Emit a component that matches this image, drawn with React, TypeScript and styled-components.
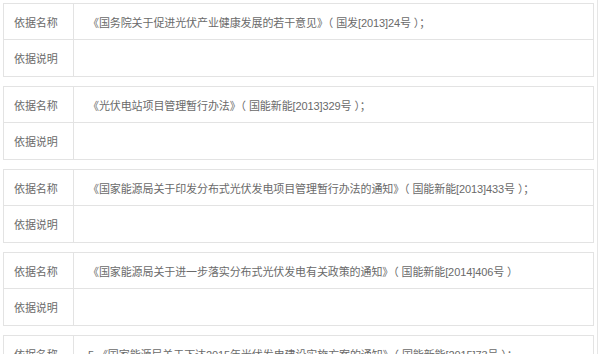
import React from "react";
import styled, { createGlobalStyle } from "styled-components";

const GlobalStyle = createGlobalStyle`
  html, body {
    margin: 0;
    padding: 0;
    background: #fff;
  }
  body {
    font-family: "Liberation Sans", "Noto Sans CJK SC", sans-serif;
  }
`;

export const Page = styled.div`
  width: 598px;
  height: 354px;
  overflow: hidden;
  border-right: 1px solid #e6e6e6;
  padding: 3px 0 0 3px;
  box-sizing: border-box;
`;

export const BasisTable = styled.div`
  width: 591px;
  border: 1px solid #e3e3e3;
  box-sizing: border-box;
  margin-bottom: 9px;
  display: grid;
  grid-template-columns: 70px 1fr;
`;

export const Cell = styled.div<{ $label?: boolean; $last?: boolean }>`
  height: 36px;
  box-sizing: border-box;
  display: flex;
  align-items: center;
  padding-left: ${(p) => (p.$label ? "10px" : "14px")};
  border-right: ${(p) => (p.$label ? "1px solid #e3e3e3" : "none")};
  border-bottom: ${(p) => (p.$last ? "none" : "1px solid #e3e3e3")};
  font-size: 11px;
  color: #6a6a6a;
  white-space: pre;
  letter-spacing: -0.1px;
`;

const basis = [
  "《国务院关于促进光伏产业健康发展的若干意见》（ 国发[2013]24号 ）；",
  "《光伏电站项目管理暂行办法》（ 国能新能[2013]329号 ）；",
  "《国家能源局关于印发分布式光伏发电项目管理暂行办法的通知》（ 国能新能[2013]433号 ）；",
  "《国家能源局关于进一步落实分布式光伏发电有关政策的通知》（ 国能新能[2014]406号 ）",
  "5 《国家能源局关于下达2015年光伏发电建设实施方案的通知》（ 国能新能[2015]73号 ）；",
];

const App: React.FC = () => {
  return (
    <>
      <GlobalStyle />
      <Page>
        {basis.map((name, i) => (
          <BasisTable key={i}>
            <Cell $label>依据名称</Cell>
            <Cell>{name}</Cell>
            <Cell $label $last>
              依据说明
            </Cell>
            <Cell $last />
          </BasisTable>
        ))}
      </Page>
    </>
  );
};

export default App;
